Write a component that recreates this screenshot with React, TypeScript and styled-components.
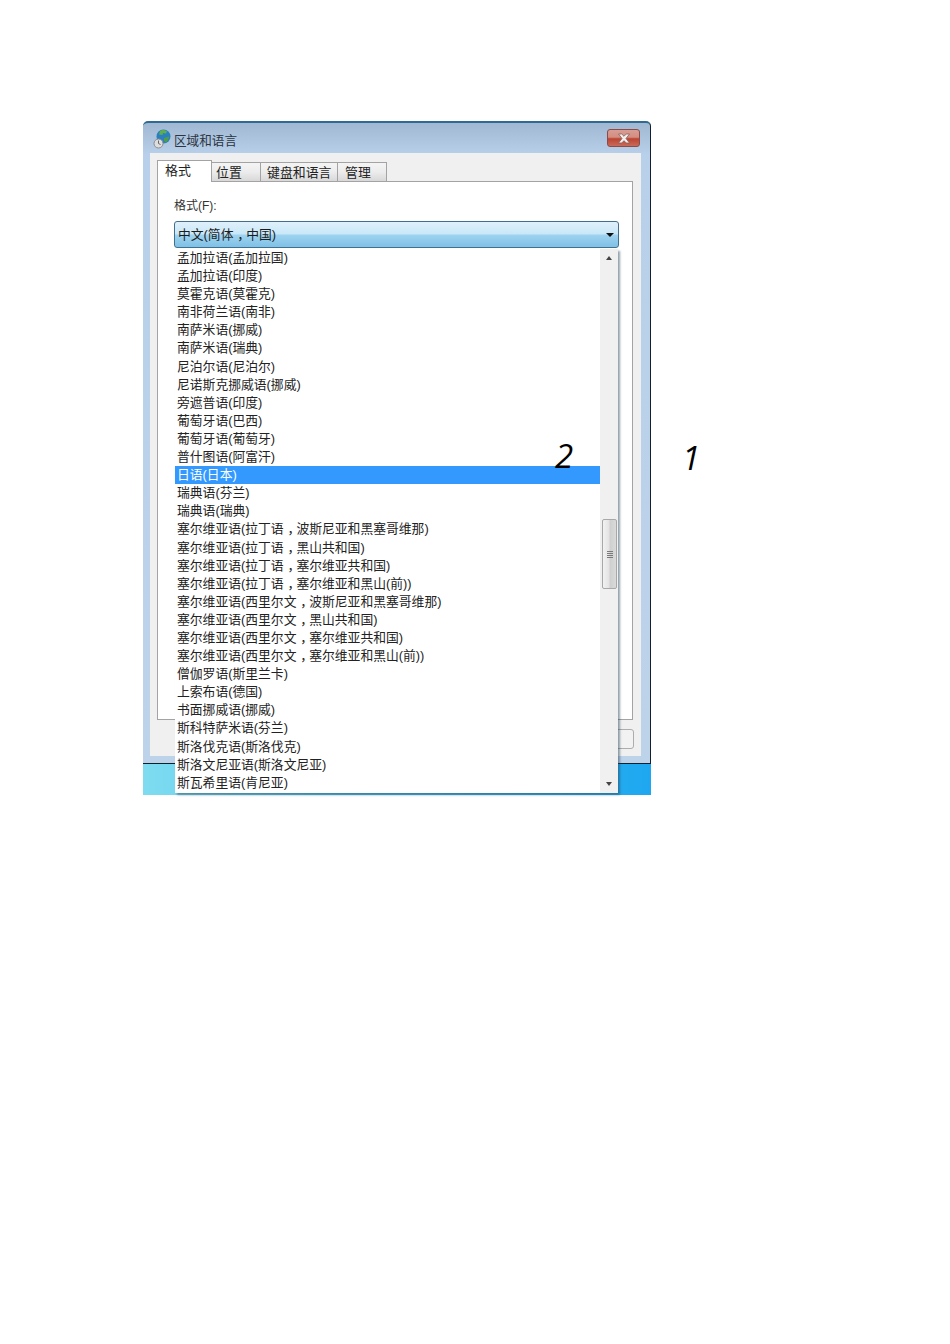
import React from "react";
import styled, { createGlobalStyle } from "styled-components";

const GlobalStyle = createGlobalStyle`
  html, body {
    margin: 0;
    padding: 0;
    background: #ffffff;
  }
  body {
    font-family: "Liberation Sans", "Noto Sans CJK SC", sans-serif;
    color: #1a1a1a;
  }
`;

const LANGUAGES = [
  "孟加拉语(孟加拉国)",
  "孟加拉语(印度)",
  "莫霍克语(莫霍克)",
  "南非荷兰语(南非)",
  "南萨米语(挪威)",
  "南萨米语(瑞典)",
  "尼泊尔语(尼泊尔)",
  "尼诺斯克挪威语(挪威)",
  "旁遮普语(印度)",
  "葡萄牙语(巴西)",
  "葡萄牙语(葡萄牙)",
  "普什图语(阿富汗)",
  "日语(日本)",
  "瑞典语(芬兰)",
  "瑞典语(瑞典)",
  "塞尔维亚语(拉丁语，波斯尼亚和黑塞哥维那)",
  "塞尔维亚语(拉丁语，黑山共和国)",
  "塞尔维亚语(拉丁语，塞尔维亚共和国)",
  "塞尔维亚语(拉丁语，塞尔维亚和黑山(前))",
  "塞尔维亚语(西里尔文，波斯尼亚和黑塞哥维那)",
  "塞尔维亚语(西里尔文，黑山共和国)",
  "塞尔维亚语(西里尔文，塞尔维亚共和国)",
  "塞尔维亚语(西里尔文，塞尔维亚和黑山(前))",
  "僧伽罗语(斯里兰卡)",
  "上索布语(德国)",
  "书面挪威语(挪威)",
  "斯科特萨米语(芬兰)",
  "斯洛伐克语(斯洛伐克)",
  "斯洛文尼亚语(斯洛文尼亚)",
  "斯瓦希里语(肯尼亚)",
];

const TABS = [
  { label: "格式", width: 55, inset: 7 },
  { label: "位置", width: 49, inset: 4 },
  { label: "键盘和语言", width: 77, inset: 6 },
  { label: "管理", width: 49, inset: 7 },
];

const Page = styled.div`
  position: relative;
  height: 1344px;
  padding: 121px 0 0 143px;
  box-sizing: border-box;
  overflow: hidden;
`;

const Window = styled.div`
  position: relative;
  width: 508px;
  height: 674px;
  display: flex;
  flex-direction: column;
`;

const Frame = styled.div`
  height: 643px;
  box-sizing: border-box;
  border-top: 2px solid #2f6a92;
  border-right: 1px solid #10202c;
  border-bottom: 1px solid #10202c;
  border-radius: 5px 5px 0 0;
  background: linear-gradient(#a0b8d2 0, #b9d0ea 32px, #bcd3ea 100%);
  padding-right: 9px;
  padding-left: 7px;
  display: flex;
  flex-direction: column;
`;

const TitleBar = styled.div`
  height: 30px;
  flex-shrink: 0;
  display: flex;
  align-items: center;
  gap: 3px;
  padding-left: 3px;
  padding-top: 2px;
  box-sizing: border-box;
  font-size: 12.6px;
  color: #2b3440;
`;

const CloseButton = styled.div`
  width: 33px;
  height: 18px;
  margin-left: auto;
  margin-right: 1px;
  margin-top: -2px;
  box-sizing: border-box;
  border: 1px solid #8c4b47;
  border-radius: 3px;
  background: linear-gradient(#d89d93 0, #d48d81 45%, #bb4432 55%, #c96a58 100%);
  display: flex;
  align-items: center;
  justify-content: center;
`;

const Client = styled.div`
  height: 603px;
  background: #f0f0f0;
  padding: 7px 8px 0 7px;
  box-sizing: border-box;
  display: flex;
  flex-direction: column;
`;

const TabStrip = styled.div`
  display: flex;
  align-items: flex-end;
  height: 22px;
  margin-bottom: -1px;
  position: relative;
  z-index: 1;
`;

const Tab = styled.div<{ $active?: boolean; $width: number; $inset: number }>`
  width: ${(p) => p.$width}px;
  height: ${(p) => (p.$active ? 22 : 20)}px;
  box-sizing: border-box;
  border: 1px solid #a3a3a3;
  border-bottom: ${(p) => (p.$active ? "none" : "1px solid #a3a3a3")};
  border-left: ${(p) => (p.$active ? "1px solid #a3a3a3" : "none")};
  background: ${(p) =>
    p.$active ? "#ffffff" : "linear-gradient(#f4f4f4 0, #ececec 50%, #d8d8d8 100%)"};
  padding: 2px 0 0 ${(p) => p.$inset}px;
  font-size: 12.9px;
  line-height: 16px;
  color: #222222;
`;

const TabPanel = styled.div`
  height: 539px;
  background: #ffffff;
  border: 1px solid #a3a3a3;
  padding: 16px 13px 0 16px;
  box-sizing: border-box;
`;

const FieldLabel = styled.div`
  font-size: 12px;
  line-height: 17px;
  color: #333333;
  margin-bottom: 6px;
`;

const Combo = styled.div`
  height: 27px;
  box-sizing: border-box;
  border: 1px solid #41708f;
  border-radius: 3px;
  background: linear-gradient(#dff1fb 0, #c9e7f8 48%, #9ed3f0 52%, #7fc1e6 100%);
  display: flex;
  align-items: center;
  justify-content: space-between;
  padding: 0 4px 2px 3px;
  font-size: 12.8px;
  color: #1c1c1c;
`;

const ComboArrow = styled.span`
  width: 0;
  height: 0;
  margin-top: 2px;
  border-left: 4px solid transparent;
  border-right: 4px solid transparent;
  border-top: 4px solid #111111;
`;

const ButtonRow = styled.div`
  display: flex;
  justify-content: flex-end;
  margin-top: 9px;
  margin-right: -1px;
`;

const GhostButton = styled.div`
  width: 80px;
  height: 20px;
  border: 1px solid #adadad;
  border-radius: 3px;
  box-sizing: border-box;
  background: #f2f2f2;
`;

const Desktop = styled.div`
  height: 31px;
  background: linear-gradient(90deg, #7fdcf0 0, #50c6ee 35%, #1ea7f0 100%);
`;

const DropList = styled.div`
  position: absolute;
  left: 32px;
  top: 128px;
  width: 443px;
  height: 544px;
  background: #ffffff;
  box-shadow: 2px 2px 2px rgba(40, 70, 90, 0.5);
  display: flex;
  z-index: 2;
`;

const Rows = styled.ul`
  flex: 1;
  margin: 0;
  padding: 0;
  list-style: none;
  overflow: hidden;
`;

const Row = styled.li<{ $selected?: boolean }>`
  height: 18.1px;
  line-height: 18px;
  padding-left: 2px;
  font-size: 12.8px;
  white-space: nowrap;
  color: ${(p) => (p.$selected ? "#ffffff" : "#222222")};
  background: ${(p) => (p.$selected ? "#3399ff" : "transparent")};
`;

// half-width form of the comma, padded so that it sits mid-cell
const Comma = styled.span`
  font-feature-settings: "halt";
  padding: 0 0.2em 0 0.3em;
`;

const ScrollBar = styled.div`
  width: 18px;
  background: #f0f0f0;
  display: flex;
  flex-direction: column;
  align-items: center;
  justify-content: space-between;
  position: relative;
  padding: 7px 0;
  box-sizing: border-box;
`;

const ScrollArrow = styled.span<{ $up?: boolean }>`
  width: 0;
  height: 0;
  border-left: 3.5px solid transparent;
  border-right: 3.5px solid transparent;
  ${(p) =>
    p.$up ? "border-bottom: 4px solid #444444;" : "border-top: 4px solid #444444;"}
`;

const ScrollThumb = styled.div`
  position: absolute;
  left: 2px;
  top: 270px;
  width: 15px;
  height: 70px;
  box-sizing: border-box;
  border: 1px solid #a8a8a8;
  border-radius: 2px;
  background: linear-gradient(90deg, #f2f2f2 0, #e4e4e4 45%, #cfcfcf 55%, #dadada 100%);
  display: flex;
  flex-direction: column;
  align-items: center;
  justify-content: center;
  gap: 1px;
`;

const Grip = styled.span`
  width: 6px;
  height: 1px;
  background: #7a7a7a;
`;

const Note = styled.span<{ $left: number; $top: number }>`
  position: absolute;
  left: ${(p) => p.$left}px;
  top: ${(p) => p.$top}px;
  font-family: "Open Sans", "Liberation Sans", sans-serif;
  font-style: italic;
  font-size: 33px;
  line-height: 40px;
  color: #000000;
  z-index: 3;
`;

function GlobeIcon() {
  return (
    <svg width="18" height="20" viewBox="0 0 18 20">
      <circle cx="10.500" cy="7.500" r="7" fill="#2a7fc0" />
      <path d="M7 2c2-1.500 5-1.500 7 .5l-1 2-3-.5-.5 2-3.500-.5z" fill="#5fae4a" />
      <path d="M11 9l5-1.500c0 3-1.500 5-3.500 6l-1.500-2z" fill="#4f9f42" />
      <circle cx="5.500" cy="14.500" r="4.500" fill="#dddddd" stroke="#8c8c8c" />
      <path d="M5.500 11.500v3l2 1" fill="none" stroke="#666666" />
    </svg>
  );
}

function CloseIcon() {
  return (
    <svg width="14" height="11" viewBox="0 0 14 11">
      <path
        d="M1.500 1h3.200L7 3.300 9.300 1h3.200L9 5.500l3.500 4.500H9.300L7 7.700 4.700 10H1.500L5 5.500z"
        fill="#f2efed"
        stroke="#85605c"
        strokeWidth="0.8"
      />
    </svg>
  );
}

function withComma(text: string) {
  const parts = text.split("，");
  return parts.map((part, i) => (
    <React.Fragment key={i}>
      {i > 0 && <Comma>，</Comma>}
      {part}
    </React.Fragment>
  ));
}

export default function App() {
  return (
    <>
      <GlobalStyle />
      <Page>
        <Window>
          <Frame>
            <TitleBar>
              <GlobeIcon />
              区域和语言
              <CloseButton>
                <CloseIcon />
              </CloseButton>
            </TitleBar>
            <Client>
              <TabStrip>
                {TABS.map((tab, i) => (
                  <Tab key={tab.label} $active={i === 0} $width={tab.width} $inset={tab.inset}>
                    {tab.label}
                  </Tab>
                ))}
              </TabStrip>
              <TabPanel>
                <FieldLabel>格式(F):</FieldLabel>
                <Combo>
                  <span>{withComma("中文(简体，中国)")}</span>
                  <ComboArrow />
                </Combo>
              </TabPanel>
              <ButtonRow>
                <GhostButton />
              </ButtonRow>
            </Client>
          </Frame>
          <Desktop />
          <DropList>
            <Rows>
              {LANGUAGES.map((name) => (
                <Row key={name} $selected={name === "日语(日本)"}>
                  {withComma(name)}
                </Row>
              ))}
            </Rows>
            <ScrollBar>
              <ScrollArrow $up />
              <ScrollThumb>
                <Grip />
                <Grip />
                <Grip />
                <Grip />
              </ScrollThumb>
              <ScrollArrow />
            </ScrollBar>
          </DropList>
        </Window>
        <Note $left={555} $top={436}>
          2
        </Note>
        <Note $left={682} $top={438}>
          1
        </Note>
      </Page>
    </>
  );
}
